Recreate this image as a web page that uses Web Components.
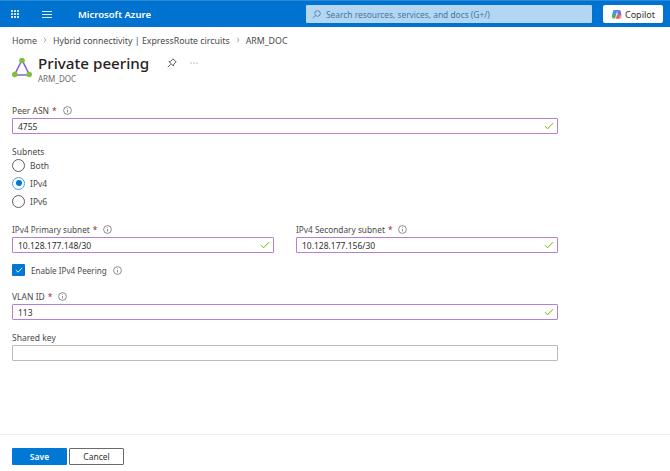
<!DOCTYPE html>
<html>
<head>
<meta charset="utf-8">
<title>Private peering</title>
<style>
    html, body { margin: 0; height: 100%; background: #fff; }
    body {
        width: 670px;
        height: 471px;
        overflow: hidden;
        display: flex;
        flex-direction: column;
        font-family: "Noto Sans", "Open Sans", sans-serif;
        font-size: 9px;
        color: #323130;
    }
    az-form { flex: 1; }
</style>
</head>
<body>
<az-topbar></az-topbar>
<az-breadcrumb></az-breadcrumb>
<az-title heading="Private peering" sub="ARM_DOC"></az-title>
<az-form>
    <az-field style="margin-top:21px" label="Peer ASN" required info value="4755" valid></az-field>
    <az-radio-group style="margin-top:12px" label="Subnets" selected="IPv4" options="Both,IPv4,IPv6"></az-radio-group>
    <az-row style="margin-top:13px">
        <az-field style="--label-size:8.2px" label="IPv4 Primary subnet" required info value="10.128.177.148/30" valid></az-field>
        <az-field style="--label-size:8.3px" label="IPv4 Secondary subnet" required info value="10.128.177.156/30" valid></az-field>
    </az-row>
    <az-check style="margin-top:11px">Enable IPv4 Peering</az-check>
    <az-field style="margin-top:14px" label="VLAN ID" required info value="113" valid></az-field>
    <az-field style="margin-top:11px" label="Shared key"></az-field>
</az-form>
<az-footer></az-footer>

<script>
const INFO_ICON = `<svg width="9" height="9" viewBox="0 0 9 9" fill="none" stroke="#605e5c" stroke-width=".7"><circle cx="4.5" cy="4.5" r="3.9"/><path d="M4.5 4v2.6"/><path d="M4.5 2.3v.8"/></svg>`;
const CHECK_ICON = `<svg width="10" height="8" viewBox="0 0 10 8" fill="none" stroke="#6bb700" stroke-width="1"><path d="M1 4.2 3.6 6.8 9 1.2"/></svg>`;

class AzTopbar extends HTMLElement {
    constructor() {
        super();
        this.attachShadow({ mode: 'open' });
        this.shadowRoot.innerHTML = `
            <style>
                :host {
                    display: flex;
                    align-items: center;
                    height: 27px;
                    box-sizing: border-box;
                    background: #0072d0;
                    border-top: 1px solid #2b8ad8;
                    color: #fff;
                    flex: none;
                }
                .waffle {
                    margin-left: 11px;
                    flex: none;
                    display: grid;
                    grid-template-columns: repeat(3, 2px);
                    grid-auto-rows: 2px;
                    gap: 1px;
                }
                .waffle i { background: #d6e8f8; }
                .menu { margin-left: 23px; display: block; flex: none; }
                .brand { margin-left: 26px; font-size: 9.5px; font-weight: 600; width: 228px; flex: none; white-space: nowrap; }
                .search {
                    width: 286px;
                    flex: none;
                    height: 18px;
                    background: #b3d6f2;
                    border-radius: 1px;
                    display: flex;
                    align-items: center;
                    color: #4577a3;
                    font-size: 8.4px;
                    white-space: nowrap;
                    box-sizing: border-box;
                    padding-left: 6px;
                    gap: 5px;
                }
                .copilot {
                    margin-left: 11px;
                    width: 60px;
                    height: 18px;
                    flex: none;
                    background: #fff;
                    border-radius: 2px;
                    color: #323130;
                    font-size: 9px;
                    display: flex;
                    align-items: center;
                    justify-content: center;
                    gap: 3px;
                }
            </style>
            <div class="waffle"><i></i><i></i><i></i><i></i><i></i><i></i><i></i><i></i><i></i></div>
            <svg class="menu" width="10" height="7" viewBox="0 0 10 7" stroke="#dcebf8" stroke-width="1"><path d="M0 .5h10M0 3.5h10M0 6.5h10"/></svg>
            <span class="brand">Microsoft Azure</span>
            <div class="search">
                <svg width="9" height="9" viewBox="0 0 9 9" fill="none" stroke="#4577a3" stroke-width=".8"><circle cx="5.5" cy="3.5" r="2.8"/><path d="M3.4 5.6.8 8.2"/></svg>
                <span>Search resources, services, and docs (G+/)</span>
            </div>
            <div class="copilot">
                <svg width="11" height="11" viewBox="0 0 11 11">
                    <path d="M2.5 1h4L5 6H1z" fill="#3f9bd8"/>
                    <path d="M6 1h1.8c1 0 1.7.7 2 1.6L10.4 6H6.6z" fill="#7d6fe0"/>
                    <path d="M1 6h4l-.8 3.4H2.4C1.2 9.4.6 8.2 1 6z" fill="#5bb04a"/>
                    <path d="M5.8 6h4.6c0 2-1 3.8-2.6 3.8H4.9z" fill="#e8547a"/>
                    <path d="M7.4 6.4h2.8c0 1-.5 2-1.2 2.6z" fill="#f2a33a"/>
                </svg>
                <span>Copilot</span>
            </div>
        `;
    }
}

class AzBreadcrumb extends HTMLElement {
    constructor() {
        super();
        this.attachShadow({ mode: 'open' });
        const crumbs = ['Home', 'Hybrid connectivity | ExpressRoute circuits', 'ARM_DOC'];
        const chevron = `<svg width="4" height="6" viewBox="0 0 4 6" fill="none" stroke="#8a8886" stroke-width=".7"><path d="M1 .8 3 3 1 5.2"/></svg>`;
        this.shadowRoot.innerHTML = `
            <style>
                :host {
                    display: flex;
                    align-items: center;
                    gap: 6px;
                    height: 12px;
                    margin: 8px 0 0 12px;
                    font-size: 8.8px;
                    color: #4a4a4a;
                    white-space: nowrap;
                    flex: none;
                }
                svg { margin-bottom: 3px; }
            </style>
            ${crumbs.map(c => `<span>${c}</span>`).join(chevron)}
        `;
    }
}

class AzTitle extends HTMLElement {
    constructor() {
        super();
        this.attachShadow({ mode: 'open' });
        this.shadowRoot.innerHTML = `
            <style>
                :host {
                    display: flex;
                    margin: 6px 0 0 12px;
                    flex: none;
                    height: 30px;
                }
                .logo { margin-top: 4px; display: block; flex: none; }
                .text { margin-left: 6px; width: 121px; flex: none; }
                h1 {
                    margin: 0;
                    font-size: 15.2px;
                    line-height: 20px;
                    font-weight: 500;
                    color: #252423;
                    white-space: nowrap;
                }
                .sub { font-size: 8px; line-height: 10px; margin-top: 1px; color: #6b6a68; }
                .actions { display: flex; align-items: center; gap: 13px; height: 20px; margin-left: 8px; }
            </style>
            <svg class="logo" width="20" height="22" viewBox="0 0 20 22">
                <path d="M10 3 2.5 18h15z" fill="none" stroke="#8c5ee0" stroke-width="1.6"/>
                <circle cx="10" cy="3.5" r="2.8" fill="#7fc13a"/>
                <circle cx="2.8" cy="17.5" r="2.8" fill="#7fc13a"/>
                <circle cx="17.2" cy="17.5" r="2.8" fill="#7fc13a"/>
            </svg>
            <div class="text">
                <h1>${this.getAttribute('heading')}</h1>
                <div class="sub">${this.getAttribute('sub')}</div>
            </div>
            <div class="actions">
                <svg width="10" height="10" viewBox="0 0 10 10" fill="none" stroke="#323130" stroke-width=".8"><path d="M6 .8 9.2 4 8.4 4.4 6.6 6.6 6.4 8 2 3.6 3.4 3.4 5.6 1.6z"/><path d="M3.8 6.2.8 9.2"/></svg>
                <svg width="8" height="2" viewBox="0 0 8 2" fill="#605e5c"><circle cx="1" cy="1" r=".5"/><circle cx="4" cy="1" r=".5"/><circle cx="7" cy="1" r=".5"/></svg>
            </div>
        `;
    }
}

class AzForm extends HTMLElement {
    constructor() {
        super();
        this.attachShadow({ mode: 'open' });
        this.shadowRoot.innerHTML = `
            <style>
                :host { display: flex; flex-direction: column; padding-left: 12px; width: 546px; }
            </style>
            <slot></slot>
        `;
    }
}

class AzRow extends HTMLElement {
    constructor() {
        super();
        this.attachShadow({ mode: 'open' });
        this.shadowRoot.innerHTML = `
            <style>
                :host { display: grid; grid-template-columns: 262px 262px; column-gap: 22px; }
            </style>
            <slot></slot>
        `;
    }
}

class AzField extends HTMLElement {
    constructor() {
        super();
        this.attachShadow({ mode: 'open' });
        const label = this.getAttribute('label');
        const value = this.getAttribute('value') || '';
        const valid = this.hasAttribute('valid');
        this.shadowRoot.innerHTML = `
            <style>
                :host { display: block; }
                .label {
                    display: flex;
                    align-items: center;
                    height: 12px;
                    font-size: var(--label-size, 8.5px);
                    color: #4a4948;
                    white-space: nowrap;
                }
                .req { color: #a4262c; margin-left: 3px; }
                .info { display: flex; margin-left: 6px; }
                .box {
                    height: 16px;
                    box-sizing: border-box;
                    margin-top: 2px;
                    border: 1px solid ${valid ? '#b57fd6' : '#bdbbb8'};
                    border-radius: 1px;
                    display: flex;
                    align-items: center;
                    justify-content: space-between;
                    padding: 0 3px 0 5px;
                    font-size: 8.5px;
                    color: #323130;
                }
                svg { display: block; }
            </style>
            <div class="label">
                <span>${label}</span>
                ${this.hasAttribute('required') ? '<span class="req">*</span>' : ''}
                ${this.hasAttribute('info') ? `<span class="info">${INFO_ICON}</span>` : ''}
            </div>
            <div class="box"><span>${value}</span>${valid ? CHECK_ICON : ''}</div>
        `;
    }
}

class AzRadioGroup extends HTMLElement {
    constructor() {
        super();
        this.attachShadow({ mode: 'open' });
        const selected = this.getAttribute('selected');
        const options = this.getAttribute('options').split(',');
        this.shadowRoot.innerHTML = `
            <style>
                :host { display: block; font-size: 8.5px; color: #4a4948; }
                .label { height: 10px; line-height: 12px; }
                .opt { display: flex; align-items: center; height: 18px; gap: 5px; }
                .dot {
                    width: 13px;
                    height: 13px;
                    box-sizing: border-box;
                    border: 1px solid #605e5c;
                    border-radius: 50%;
                    display: flex;
                    align-items: center;
                    justify-content: center;
                }
                .on { border-color: #4ba0e0; }
                .on::after { content: ''; width: 6px; height: 6px; border-radius: 50%; background: #0078d4; }
            </style>
            <div class="label">${this.getAttribute('label')}</div>
            ${options.map(o => `<div class="opt"><span class="dot ${o === selected ? 'on' : ''}"></span><span>${o}</span></div>`).join('')}
        `;
    }
}

class AzCheck extends HTMLElement {
    constructor() {
        super();
        this.attachShadow({ mode: 'open' });
        this.shadowRoot.innerHTML = `
            <style>
                :host {
                    display: flex;
                    align-items: center;
                    gap: 6px;
                    height: 12px;
                    font-size: 8.1px;
                    color: #4a4948;
                    white-space: nowrap;
                }
                .box {
                    width: 13px;
                    height: 12px;
                    background: #0078d4;
                    border-radius: 1px;
                    display: flex;
                    align-items: center;
                    justify-content: center;
                }
                .info { display: flex; margin-left: 0; }
            </style>
            <span class="box"><svg width="8" height="6" viewBox="0 0 8 6" fill="none" stroke="#fff" stroke-width=".9"><path d="M.8 3 3 5.2 7.2.8"/></svg></span>
            <slot></slot>
            <span class="info">${INFO_ICON}</span>
        `;
    }
}

class AzFooter extends HTMLElement {
    constructor() {
        super();
        this.attachShadow({ mode: 'open' });
        this.shadowRoot.innerHTML = `
            <style>
                :host {
                    display: flex;
                    gap: 2px;
                    flex: none;
                    height: 37px;
                    box-sizing: border-box;
                    border-top: 1px solid #f0efee;
                    padding: 13px 0 0 12px;
                }
                button {
                    height: 17px;
                    width: 55px;
                    padding: 0;
                    font: inherit;
                    font-size: 8.5px;
                    border-radius: 1px;
                    box-sizing: border-box;
                }
                .save { background: #0078d4; border: 0; color: #fff; font-weight: 600; }
                .cancel { background: #fff; border: 1px solid #6b6a68; color: #323130; }
            </style>
            <button class="save">Save</button>
            <button class="cancel">Cancel</button>
        `;
    }
}

customElements.define('az-topbar', AzTopbar);
customElements.define('az-breadcrumb', AzBreadcrumb);
customElements.define('az-title', AzTitle);
customElements.define('az-form', AzForm);
customElements.define('az-row', AzRow);
customElements.define('az-field', AzField);
customElements.define('az-radio-group', AzRadioGroup);
customElements.define('az-check', AzCheck);
customElements.define('az-footer', AzFooter);
</script>
</body>
</html>
